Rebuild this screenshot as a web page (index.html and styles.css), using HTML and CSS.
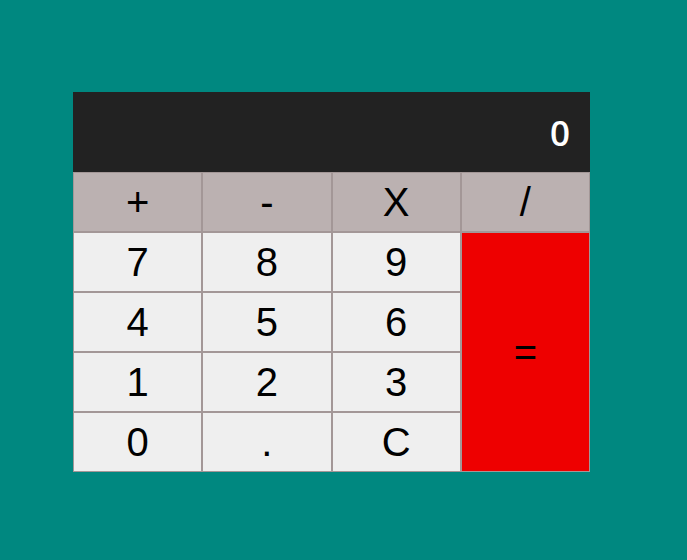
FILE: index.html
```html
<!DOCTYPE html>
<html>
<head>
<meta charset="utf-8">
<link rel="stylesheet" href="styles.css">
</head>
<body>
<div class="calc">
  <div class="display">0</div>
  <div class="keys">
    <button class="key op">+</button>
    <button class="key op">-</button>
    <button class="key op">X</button>
    <button class="key op">/</button>
    <button class="key">7</button>
    <button class="key">8</button>
    <button class="key">9</button>
    <button class="key eq">=</button>
    <button class="key">4</button>
    <button class="key">5</button>
    <button class="key">6</button>
    <button class="key">1</button>
    <button class="key">2</button>
    <button class="key">3</button>
    <button class="key">0</button>
    <button class="key">.</button>
    <button class="key">C</button>
  </div>
</div>
</body>
</html>
```
FILE: styles.css
```css
html, body {
  margin: 0;
  padding: 0;
  background: #008880;
  height: 100%;
}
.calc {
  width: 517px;
  margin-left: 73px;
  padding-top: 92px;
}
.display {
  height: 80px;
  background: #222222;
  color: #ffffff;
  font-family: "Open Sans", sans-serif;
  font-weight: 600;
  font-size: 35px;
  display: flex;
  align-items: center;
  justify-content: flex-end;
  padding-right: 20px;
  box-sizing: border-box;
}
.keys {
  display: grid;
  grid-template-columns: repeat(4, 1fr);
  grid-auto-rows: 60px;
}
.key {
  margin: 0;
  border: 1px solid #a39797;
  background: #efefef;
  font-family: "Liberation Sans", Arial, sans-serif;
  font-size: 40px;
  color: #000;
  display: flex;
  align-items: center;
  justify-content: center;
  padding: 0;
  box-sizing: border-box;
}
.op {
  background: #bbb1b1;
}
.eq {
  grid-column: 4;
  grid-row: 2 / span 4;
  background: #ee0000;
}
```
